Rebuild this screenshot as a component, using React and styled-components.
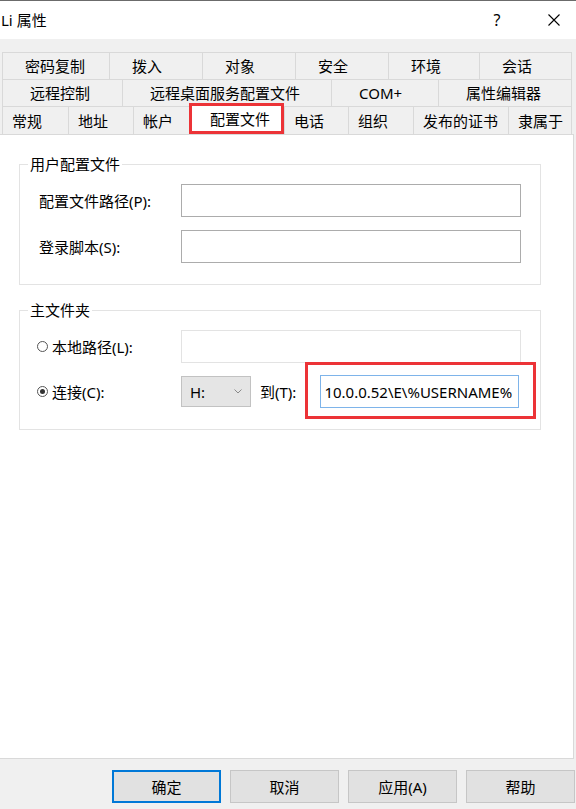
import React from 'react'
import styled, { createGlobalStyle } from 'styled-components';

const font = `"Noto Sans", "Noto Sans CJK SC", sans-serif`;

const GlobalStyle = createGlobalStyle`
    html, body {
        margin : 0;
        padding : 0;
        background : #f0f0f0;
    }
    body {
        font-family : ${font};
        font-size : 15px;
        color : #000;
    }
`;

const Window = styled.div`
    width : 576px;
    height : 809px;
    overflow : hidden;
    display : flex;
    flex-direction : column;
    background : #f0f0f0;
`;

const TitleBar = styled.div`
    height : 38px;
    border-top : 1px solid #6b6b6b;
    background : #fff;
    display : flex;
    align-items : center;
    padding-left : 1px;
`;

const Title = styled.div`
    flex : 1;
    font-size : 15px;
    line-height : 20px;
`;

const TitleButton = styled.div`
    width : ${p => p.$w}px;
    height : 38px;
    display : flex;
    align-items : center;
    justify-content : center;
    font-size : 16px;
`;

const Main = styled.div`
    padding-top : 13px;
    display : flex;
    flex-direction : column;
`;

const TabRow = styled.div`
    display : flex;
    height : ${p => p.$h}px;
    padding-left : 2px;
`;

const Tab = styled.div`
    flex : none;
    box-sizing : border-box;
    width : ${p => p.$w}px;
    height : 100%;
    border-top : 1px solid #d9d9d9;
    border-left : 1px solid #d9d9d9;
    border-right : ${p => p.$last ? '1px solid #d9d9d9' : 'none'};
    padding-left : ${p => p.$pad}px;
    display : flex;
    align-items : center;
    white-space : nowrap;
    line-height : 20px;
    background : #f0f0f0;
`;

const ActiveTab = styled.div`
    flex : none;
    position : relative;
    z-index : 1;
    box-sizing : border-box;
    width : ${p => p.$w}px;
    height : 31px;
    margin-top : -3px;
    border : 3px solid #ec3337;
    padding-left : 18px;
    display : flex;
    align-items : center;
    white-space : nowrap;
    line-height : 20px;
    background : #fff;
`;

const Panel = styled.div`
    box-sizing : border-box;
    width : 574px;
    height : 625px;
    background : #fff;
    border : 1px solid #d9d9d9;
    border-left : none;
    padding : 19px 0 0 19px;
`;

const Group = styled.fieldset`
    box-sizing : border-box;
    width : 522px;
    margin : ${p => p.$top}px 0 0 0;
    border : 1px solid #e3e3e3;
    padding : 10px 19px 21px 0;
`;

const Legend = styled.legend`
    padding : 0 2px;
    margin-left : 8px;
    line-height : 20px;
    font-size : 15px;
`;

const FieldGrid = styled.div`
    display : grid;
    grid-template-columns : ${p => p.$label}px 1fr;
    row-gap : ${p => p.$gap}px;
    align-items : center;
    padding-left : ${p => p.$left}px;
`;

const Label = styled.div`
    display : flex;
    align-items : center;
    line-height : 20px;
    white-space : nowrap;
`;

const TextBox = styled.div`
    box-sizing : border-box;
    width : ${p => p.$w}px;
    height : ${p => p.$h}px;
    border : 1px solid ${p => p.$focus ? '#7eb4ea' : p.$disabled ? '#e3e3e3' : '#acacac'};
    background : #fff;
    display : flex;
    align-items : center;
    padding-left : 3px;
    white-space : nowrap;
    line-height : 20px;
`;

const Radio = styled.span`
    box-sizing : border-box;
    width : 11px;
    height : 11px;
    border-radius : 50%;
    border : 1px solid #555;
    margin-right : 4px;
    display : inline-flex;
    align-items : center;
    justify-content : center;
    &::after {
        content : '';
        width : 5px;
        height : 5px;
        border-radius : 50%;
        background : ${p => p.$checked ? '#333' : 'transparent'};
    }
`;

const ConnectRow = styled.div`
    display : flex;
    align-items : center;
`;

const Combo = styled.div`
    box-sizing : border-box;
    width : 70px;
    height : 31px;
    border : 1px solid #c2c2c2;
    background : #e5e5e5;
    display : flex;
    align-items : center;
    justify-content : space-between;
    padding : 0 8px 0 8px;
    line-height : 20px;
`;

const ToLabel = styled.div`
    margin : 0 24px 0 9px;
    line-height : 20px;
    white-space : nowrap;
`;

const Marked = styled.div`
    position : relative;
    &::after {
        content : '';
        position : absolute;
        inset : -13px -17px -11px -15px;
        border : 3px solid #ec3337;
        pointer-events : none;
    }
`;

const Footer = styled.div`
    display : flex;
    gap : 9px;
    padding : 11px 0 0 112px;
`;

const Button = styled.div`
    flex : none;
    box-sizing : border-box;
    width : 109px;
    height : 33px;
    background : #e1e1e1;
    border : ${p => p.$default ? '2px solid #0078d7' : '1px solid #c6c6c6'};
    display : flex;
    align-items : center;
    justify-content : center;
    line-height : 20px;
`;

const Chevron = () => (
    <svg width="8" height="5" viewBox="0 0 8 5">
        <polyline points="0.5,0.5 4,4 7.5,0.5" fill="none" stroke="#8a8a8a" strokeWidth="1" />
    </svg>
);

const CloseIcon = () => (
    <svg width="12" height="12" viewBox="0 0 12 12">
        <path d="M0.5 0.5 L11.5 11.5 M11.5 0.5 L0.5 11.5" stroke="#000" strokeWidth="1.1" />
    </svg>
);

const rows = [
    { h : 27, pad : 22, tabs : [['密码复制', 107], ['拨入', 93], ['对象', 93], ['安全', 93], ['环境', 91], ['会话', 93]] },
    { h : 27, pad : 27, tabs : [['远程控制', 120], ['远程桌面服务配置文件', 209], ['COM+', 107], ['属性编辑器', 134]] },
    { h : 28, pad : 9, tabs : [['常规', 66], ['地址', 65], ['帐户', 56], ['配置文件', 95, true], ['电话', 64], ['组织', 65], ['发布的证书', 95], ['隶属于', 64]] },
];

const App = () => {
    return (
        <Window>
            <GlobalStyle />
            <TitleBar>
                <Title>Li 属性</Title>
                <TitleButton $w={20}>?</TitleButton>
                <TitleButton $w={37}></TitleButton>
                <TitleButton $w={20}><CloseIcon /></TitleButton>
                <TitleButton $w={12}></TitleButton>
            </TitleBar>
            <Main>
                {rows.map((row, r) => (
                    <TabRow key={r} $h={row.h}>
                        {row.tabs.map(([label, w, active], i) => active
                            ? <ActiveTab key={label} $w={w}>{label}</ActiveTab>
                            : <Tab key={label} $w={w} $pad={row.pad} $last={i === row.tabs.length - 1}>{label}</Tab>
                        )}
                    </TabRow>
                ))}
                <Panel>
                    <Group $top={0}>
                        <Legend>用户配置文件</Legend>
                        <FieldGrid $label={142} $gap={13} $left={19}>
                            <Label>配置文件路径(P):</Label>
                            <TextBox $w={340} $h={33} />
                            <Label>登录脚本(S):</Label>
                            <TextBox $w={340} $h={33} />
                        </FieldGrid>
                    </Group>
                    <Group $top={15}>
                        <Legend>主文件夹</Legend>
                        <FieldGrid $label={144} $gap={12} $left={17}>
                            <Label><Radio />本地路径(L):</Label>
                            <TextBox $w={340} $h={33} $disabled />
                            <Label><Radio $checked />连接(C):</Label>
                            <ConnectRow>
                                <Combo>H:<Chevron /></Combo>
                                <ToLabel>到(T):</ToLabel>
                                <Marked>
                                    <TextBox $w={199} $h={33} $focus>10.0.0.52\E\%USERNAME%</TextBox>
                                </Marked>
                            </ConnectRow>
                        </FieldGrid>
                    </Group>
                </Panel>
                <Footer>
                    <Button $default>确定</Button>
                    <Button>取消</Button>
                    <Button>应用(A)</Button>
                    <Button>帮助</Button>
                </Footer>
            </Main>
        </Window>
    )
}

export default App
